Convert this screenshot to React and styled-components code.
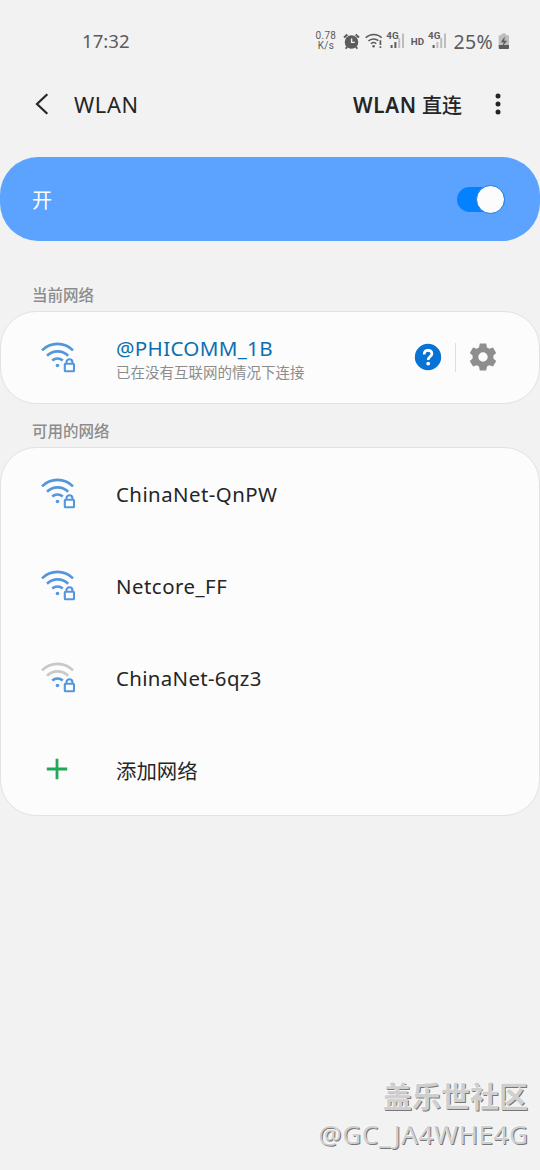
import React from 'react'
import styled, { createGlobalStyle } from 'styled-components'

const networks = [
  { name: 'ChinaNet-QnPW', level: 3, spacing: '0.45px' },
  { name: 'Netcore_FF', level: 3, spacing: '0.5px' },
  { name: 'ChinaNet-6qz3', level: 1, spacing: '0.35px' },
]

function WifiIcon({ level }) {
  const on = '#5496de'
  const off = '#c8c8c8'
  return (
    <svg width="36" height="32" viewBox="0 0 36 32" fill="none" strokeWidth="2.6">
      <path d="M2 9.3A22 22 0 0 1 33 9.3" stroke={level > 2 ? on : off} />
      <path d="M7 14.7A15.2 15.2 0 0 1 28.2 14.7" stroke={level > 1 ? on : off} />
      <path d="M12.2 19.4A8.2 8.2 0 0 1 22.8 19.4" stroke={on} />
      <circle cx="17.5" cy="24.5" r="1.8" fill={on} />
      <path d="M23 31V21L25.5 17.4H33L36 20V31Z" fill="#fcfcfc" />
      <rect x="24.8" y="22.8" width="9.2" height="7.4" rx="0.8" stroke={on} strokeWidth="2.1" />
      <path d="M26.4 22.8V21.3A3 3 0 0 1 32.4 21.3V22.8" stroke={on} strokeWidth="2.1" />
    </svg>
  )
}

function AlarmIcon() {
  return (
    <svg width="17" height="17" viewBox="0 0 17 17" fill="none">
      <circle cx="8.5" cy="9" r="6.8" fill="#5c5c5c" />
      <path d="M1 4.6L4.4 1.6M12.6 1.6L16 4.6" stroke="#5c5c5c" strokeWidth="2" />
      <path d="M4.2 13.4L2.7 15.7M12.8 13.4L14.3 15.7" stroke="#5c5c5c" strokeWidth="1.8" />
      <path d="M8.6 5.4V9.4H11.8" stroke="#f2f2f2" strokeWidth="1.4" />
    </svg>
  )
}

function StatusWifi() {
  return (
    <svg width="18" height="16" viewBox="0 0 18 16" fill="none" stroke="#5c5c5c" strokeWidth="1.5">
      <path d="M0.7 4.8A11.5 11.5 0 0 1 16.8 4.8" />
      <path d="M3.4 8A7.6 7.6 0 0 1 13.4 7.6" />
      <path d="M5.9 10.7A4.2 4.2 0 0 1 11.3 10.7" />
      <circle cx="8.6" cy="13.2" r="1.3" fill="#5c5c5c" stroke="none" />
      <path d="M15.4 7.3V12M15.4 13.3V15" strokeWidth="1.7" />
    </svg>
  )
}

function SignalIcon({ level }) {
  const bars = [3, 6, 10, 14.5]
  return (
    <svg width="15" height="16" viewBox="0 0 15 16">
      {bars.map((h, i) => (
        <rect key={h} x={0.6 + i * 3.8} y={15 - h} width="2" height={h} fill={i < level ? '#5c5c5c' : '#bdbdbd'} />
      ))}
    </svg>
  )
}

function BatteryIcon() {
  return (
    <svg width="12" height="17" viewBox="0 0 12 17">
      <path d="M3.5 0.5H8V2.3H10Q11 2.3 11 3.3V12H0.7V3.3Q0.7 2.3 1.7 2.3H3.5Z" fill="#bdbdbd" />
      <path d="M0.7 12H11V15Q11 16 10 16H1.7Q0.7 16 0.7 15Z" fill="#5c5c5c" />
      <path d="M6.8 3.6L2.9 9.2H5.5L4.8 13.3L9 7.7H6.2Z" fill="#5c5c5c" />
    </svg>
  )
}

export default function App() {
  return (
    <Page>
      <Global />
      <StatusBar>
        <Clock>17:32</Clock>
        <StatusIcons>
          <Speed>
            <span>0.78</span>
            <span>K/s</span>
          </Speed>
          <AlarmIcon />
          <WifiWrap><StatusWifi /></WifiWrap>
          <Signal>
            <Gen>4G</Gen>
            <SignalIcon level={2} />
          </Signal>
          <Hd>HD</Hd>
          <Signal>
            <Gen>4G</Gen>
            <SignalIcon level={1} />
          </Signal>
          <Percent>25%</Percent>
          <BatteryIcon />
        </StatusIcons>
      </StatusBar>

      <Header>
        <Back width="14" height="22" viewBox="0 0 14 22">
          <path d="M12.3 1.2L2 11L12.3 20.8" fill="none" stroke="#252525" strokeWidth="2.2" />
        </Back>
        <Title>WLAN</Title>
        <Direct><Latin>WLAN</Latin> 直连</Direct>
        <More width="6" height="22" viewBox="0 0 6 22" fill="#252525">
          <circle cx="3" cy="3" r="2.5" />
          <circle cx="3" cy="11" r="2.5" />
          <circle cx="3" cy="19" r="2.5" />
        </More>
      </Header>

      <SwitchBar>
        <State>开</State>
        <Track>
          <Thumb />
        </Track>
      </SwitchBar>

      <Label $height={70}>当前网络</Label>
      <Card>
        <Row>
          <IconBox><WifiIcon level={3} /></IconBox>
          <Info>
            <Connected>@PHICOMM_1B</Connected>
            <Summary>已在没有互联网的情况下连接</Summary>
          </Info>
          <Actions>
            <svg width="28" height="28" viewBox="0 0 28 28" fill="none">
              <circle cx="14" cy="14" r="13.2" fill="#0873d2" />
              <path
                d="M10.2 11.4C10.2 8.9 11.8 7.3 14.1 7.3C16.4 7.3 17.9 8.7 17.9 10.8C17.9 13.5 14.2 13.7 14.2 17"
                stroke="#fff"
                strokeWidth="2.7"
              />
              <circle cx="14.2" cy="20.6" r="1.9" fill="#fff" />
            </svg>
            <Divider />
            <svg width="28" height="28" viewBox="0 0 28 28">
              <path
                d="M10.8 0.6H17.2L18 4.4L20.3 5.7L24 4.5L27.2 10L24.4 12.6V15.4L27.2 18L24 23.5L20.3 22.3L18 23.6L17.2 27.4H10.8L10 23.6L7.7 22.3L4 23.5L0.8 18L3.6 15.4V12.6L0.8 10L4 4.5L7.7 5.7L10 4.4ZM14 9.3A4.7 4.7 0 1 0 14 18.7A4.7 4.7 0 1 0 14 9.3Z"
                fill="#8e8e8e"
                fillRule="evenodd"
              />
            </svg>
          </Actions>
        </Row>
      </Card>

      <Label $height={43}>可用的网络</Label>
      <Card>
        {networks.map((n) => (
          <Row key={n.name}>
            <IconBox><WifiIcon level={n.level} /></IconBox>
            <Name $spacing={n.spacing}>{n.name}</Name>
          </Row>
        ))}
        <Row>
          <IconBox>
            <Plus width="22" height="22" viewBox="0 0 22 22">
              <path d="M11 0.8V21.2M0.8 11H21.2" stroke="#20a857" strokeWidth="2.8" />
            </Plus>
          </IconBox>
          <Name>添加网络</Name>
        </Row>
      </Card>

      <Watermark>
        <Community>盖乐世社区</Community>
        <User>@GC_JA4WHE4G</User>
      </Watermark>
    </Page>
  )
}

const Global = createGlobalStyle`
* {
  box-sizing: border-box;
}
body {
  margin: 0;
  background: #f2f2f2;
}
svg {
  display: block;
  flex-shrink: 0;
}
`;

const Page = styled.div`
width: 540px;
height: 1170px;
overflow: hidden;
display: flex;
flex-direction: column;
background: #f2f2f2;
color: #252525;
font-family: 'Noto Sans', 'Noto Sans CJK SC', sans-serif;
white-space: nowrap;
`;

const StatusBar = styled.div`
display: flex;
align-items: center;
justify-content: space-between;
height: 82px;
padding: 0 30px 0 82px;
color: #5c5c5c;
`;
const Clock = styled.div`
font-size: 18.6px;
padding-bottom: 2px;
`;
const StatusIcons = styled.div`
display: flex;
align-items: center;
`;
const Speed = styled.div`
display: flex;
flex-direction: column;
align-items: center;
font-family: Roboto, sans-serif;
font-size: 10px;
line-height: 10px;
letter-spacing: 0.3px;
margin-right: 7px;
`;
const WifiWrap = styled.div`
margin: 0 1px 0 5px;
`;
const Signal = styled.div`
position: relative;
padding-left: 4px;
margin-left: 2px;
`;
const Gen = styled.span`
position: absolute;
left: 0;
top: -3px;
font-family: Roboto, sans-serif;
font-size: 9.8px;
line-height: 12px;
font-weight: 700;
`;
const Hd = styled.div`
font-family: Roboto, sans-serif;
font-size: 9.8px;
font-weight: 700;
margin: 0 2px 0 5.5px;
`;
const Percent = styled.div`
font-size: 19.5px;
letter-spacing: 0.3px;
margin: 0 5px 0 6.5px;
`;

const Header = styled.div`
display: flex;
align-items: center;
height: 45px;
margin-bottom: 30px;
padding: 0 39px 0 35px;
`;
const Back = styled.svg`
margin-bottom: 1px;
`;
const Title = styled.div`
font-size: 21.8px;
letter-spacing: 0.6px;
margin-left: 25px;
`;
const Direct = styled.div`
font-size: 20px;
font-weight: 500;
margin: 0 33px 0 auto;
`;
const Latin = styled.span`
font-size: 20.6px;
font-weight: 600;
letter-spacing: 0.7px;
`;
const More = styled.svg`
margin-bottom: 1px;
`;

const SwitchBar = styled.div`
display: flex;
align-items: center;
justify-content: space-between;
height: 84px;
padding: 0 35px 0 32px;
border-radius: 38px;
background: #5ca3ff;
color: #fff;
`;
const State = styled.div`
font-size: 20px;
`;
const Track = styled.div`
display: flex;
align-items: center;
justify-content: flex-end;
width: 48px;
height: 25px;
border-radius: 13px;
background: #0381fe;
`;
const Thumb = styled.div`
width: 29px;
height: 29px;
flex-shrink: 0;
border: 1px solid #1f78d8;
border-radius: 50%;
background: #fcfcfc;
`;

const Label = styled.div`
height: ${(p) => p.$height}px;
padding: 0 32px 5px;
display: flex;
align-items: flex-end;
font-size: 15.5px;
line-height: 22px;
font-weight: 500;
color: #8c8c8c;
`;
const Card = styled.div`
border: 1px solid #e2e2e2;
border-radius: 36px;
background: #fcfcfc;
`;
const Row = styled.div`
display: flex;
align-items: center;
height: 92px;
padding: 0 42px 0 39px;

${Card} > &:last-child {
  height: 91px;
}
`;
const IconBox = styled.div`
width: 76px;
padding-bottom: 2px;
`;
const Plus = styled.svg`
margin-left: 6px;
`;
const Info = styled.div`
margin-right: auto;
padding-top: 4px;
`;
const Actions = styled.div`
display: flex;
align-items: center;
padding-bottom: 1px;
`;
const Name = styled.div`
font-size: 20.4px;
letter-spacing: ${(p) => p.$spacing || '0'};
`;
const Connected = styled.div`
font-size: 20.6px;
line-height: 25px;
letter-spacing: 0.3px;
color: #0c70b0;
`;
const Summary = styled.div`
font-size: 14.5px;
line-height: 22px;
color: #8c8c8c;
`;
const Divider = styled.div`
width: 1px;
height: 29px;
margin: 0 13px;
background: #dedede;
`;

const Watermark = styled.div`
margin: auto 12px 18px auto;
text-align: right;
color: #cfcfcf;
text-shadow: -1px -1px 0 #faf8f5, 1px 1px 0 #777;
`;
const Community = styled.div`
font-size: 29px;
line-height: 38px;
font-weight: 700;
`;
const User = styled.div`
font-size: 26px;
line-height: 36px;
letter-spacing: 0.6px;
margin-right: -0.6px;
`;
